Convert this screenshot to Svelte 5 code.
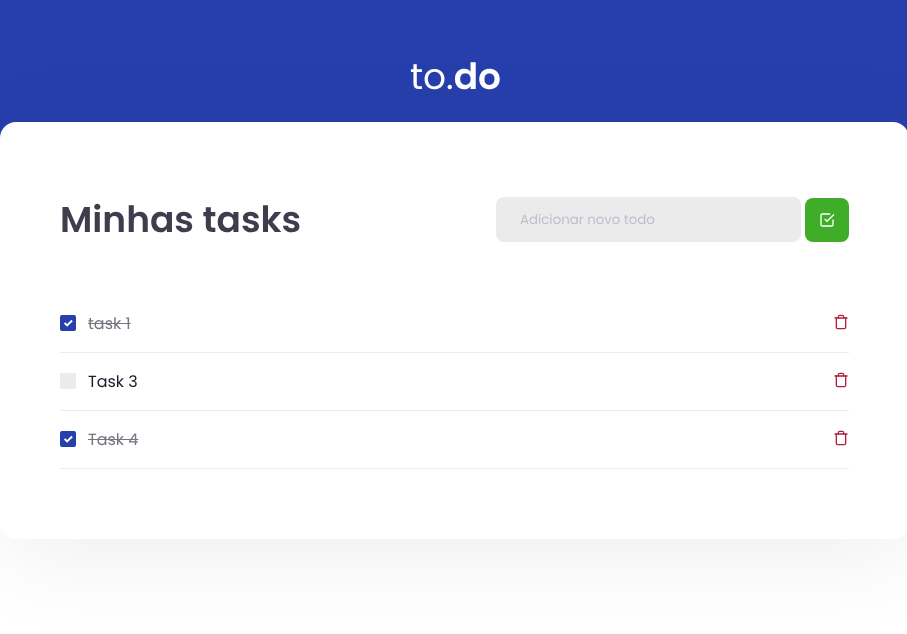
<script>
  let title = $state('');
  let tasks = $state([
    { id: 1, title: 'task 1', done: true },
    { id: 2, title: 'Task 3', done: false },
    { id: 3, title: 'Task 4', done: true }
  ]);

  function addTask() {
    if (!title.trim()) return;
    tasks.push({ id: Date.now(), title, done: false });
    title = '';
  }

  function removeTask(id) {
    tasks = tasks.filter((task) => task.id !== id);
  }
</script>

<div class="page">
  <header>
    <h1 aria-label="to.do"><span>to.</span><b>do</b></h1>
  </header>

  <main>
    <div class="top">
      <h2>Minhas tasks</h2>
      <div class="entry">
        <input type="text" placeholder="Adicionar novo todo" bind:value={title} />
        <button class="add" aria-label="Adicionar" onclick={addTask}>
          <svg viewBox="0 0 24 24" width="16" height="16">
            <polyline points="9 11 12 14 22 4" />
            <path d="M21 12v7a2 2 0 0 1-2 2H5a2 2 0 0 1-2-2V5a2 2 0 0 1 2-2h11" />
          </svg>
        </button>
      </div>
    </div>

    <ul>
      {#each tasks as task (task.id)}
        <li class:done={task.done}>
          <label>
            <input type="checkbox" bind:checked={task.done} />
            <span class="box">
              {#if task.done}
                <svg viewBox="0 0 16 16" width="16" height="16">
                  <path d="M4.6 7.9l2.5 2.5 5-4.9" />
                </svg>
              {/if}
            </span>
            <span class="name">{task.title}</span>
          </label>
          <button class="remove" aria-label="Remover" onclick={() => removeTask(task.id)}>
            <svg viewBox="0 0 24 24" width="16" height="16">
              <polyline points="3 6 5 6 21 6" />
              <path d="M19 6v14a2 2 0 0 1-2 2H7a2 2 0 0 1-2-2V6m3 0V4a2 2 0 0 1 2-2h4a2 2 0 0 1 2 2v2" />
            </svg>
          </button>
        </li>
      {/each}
    </ul>
  </main>
</div>

<style>
  :global(body) {
    margin: 0;
    background: #fff;
    font-family: Poppins, Inter, "Open Sans", sans-serif;
    text-rendering: geometricPrecision;
    -webkit-font-smoothing: antialiased;
  }
  .page {
    height: 634px;
    overflow: hidden;
    will-change: transform;
  }
  header {
    height: 154px;
    box-sizing: border-box;
    background: #273fad;
    display: flex;
    justify-content: center;
    align-items: flex-start;
    padding-top: 52px;
  }
  h1 {
    margin: 0 0 0 4px;
    color: #fff;
    font-size: 36px;
    line-height: 50px;
    font-weight: 400;
    display: flex;
  }
  h1 b {
    font-weight: 600;
  }
  main {
    box-sizing: border-box;
    width: 909px;
    height: 417px;
    margin-top: -32px;
    padding: 75px 60px 0;
    border-radius: 16px;
    background: #fff;
    position: relative;
    box-shadow: 5px 16px 100px rgba(0, 0, 0, 0.07);
  }
  .top {
    display: flex;
    justify-content: space-between;
    height: 45px;
  }
  h2 {
    margin: 0;
    color: #3d3d4d;
    font-size: 36px;
    line-height: 45px;
    font-weight: 600;
    white-space: nowrap;
  }
  .entry {
    display: flex;
    align-items: flex-end;
    gap: 4px;
  }
  .entry input {
    box-sizing: border-box;
    width: 305px;
    height: 45px;
    padding: 0 24px;
    border: 0;
    border-radius: 8px;
    background: #ebebeb;
    color: #3d3d4d;
    font: inherit;
    font-size: 13.333px;
    text-rendering: geometricPrecision;
    outline: 0;
  }
  .entry input::placeholder {
    color: #bfbfcc;
    opacity: 1;
  }
  button {
    border: 0;
    padding: 0;
    cursor: pointer;
  }
  svg {
    display: block;
    fill: none;
    stroke: currentColor;
    stroke-width: 2;
    stroke-linecap: round;
    stroke-linejoin: round;
  }
  .add {
    width: 44px;
    height: 44px;
    border-radius: 8px;
    background: #3fad27;
    color: #fff;
    display: flex;
    align-items: center;
    justify-content: center;
  }
  ul {
    list-style: none;
    margin: 53px 0 0;
    padding: 0;
  }
  li {
    box-sizing: border-box;
    height: 58px;
    border-bottom: 1px solid #ebebeb;
    display: flex;
    justify-content: space-between;
    align-items: center;
  }
  label {
    display: flex;
    align-items: center;
    gap: 12px;
    cursor: pointer;
  }
  label input {
    display: none;
  }
  .box {
    width: 16px;
    height: 16px;
    margin-bottom: 2px;
    border-radius: 2px;
    background: #ebebeb;
    color: #fff;
  }
  .box svg {
    stroke-linecap: butt;
    stroke-linejoin: miter;
  }
  .done .box {
    background: #273fad;
  }
  .name {
    font-size: 16px;
    line-height: 24px;
    color: #1d1d2e;
  }
  .done .name {
    color: #77757f;
    text-decoration: line-through;
  }
  .remove {
    background: none;
    color: #b01f3c;
    margin-bottom: 1px;
  }
  .remove svg {
    margin-bottom: 2px;
  }
</style>
